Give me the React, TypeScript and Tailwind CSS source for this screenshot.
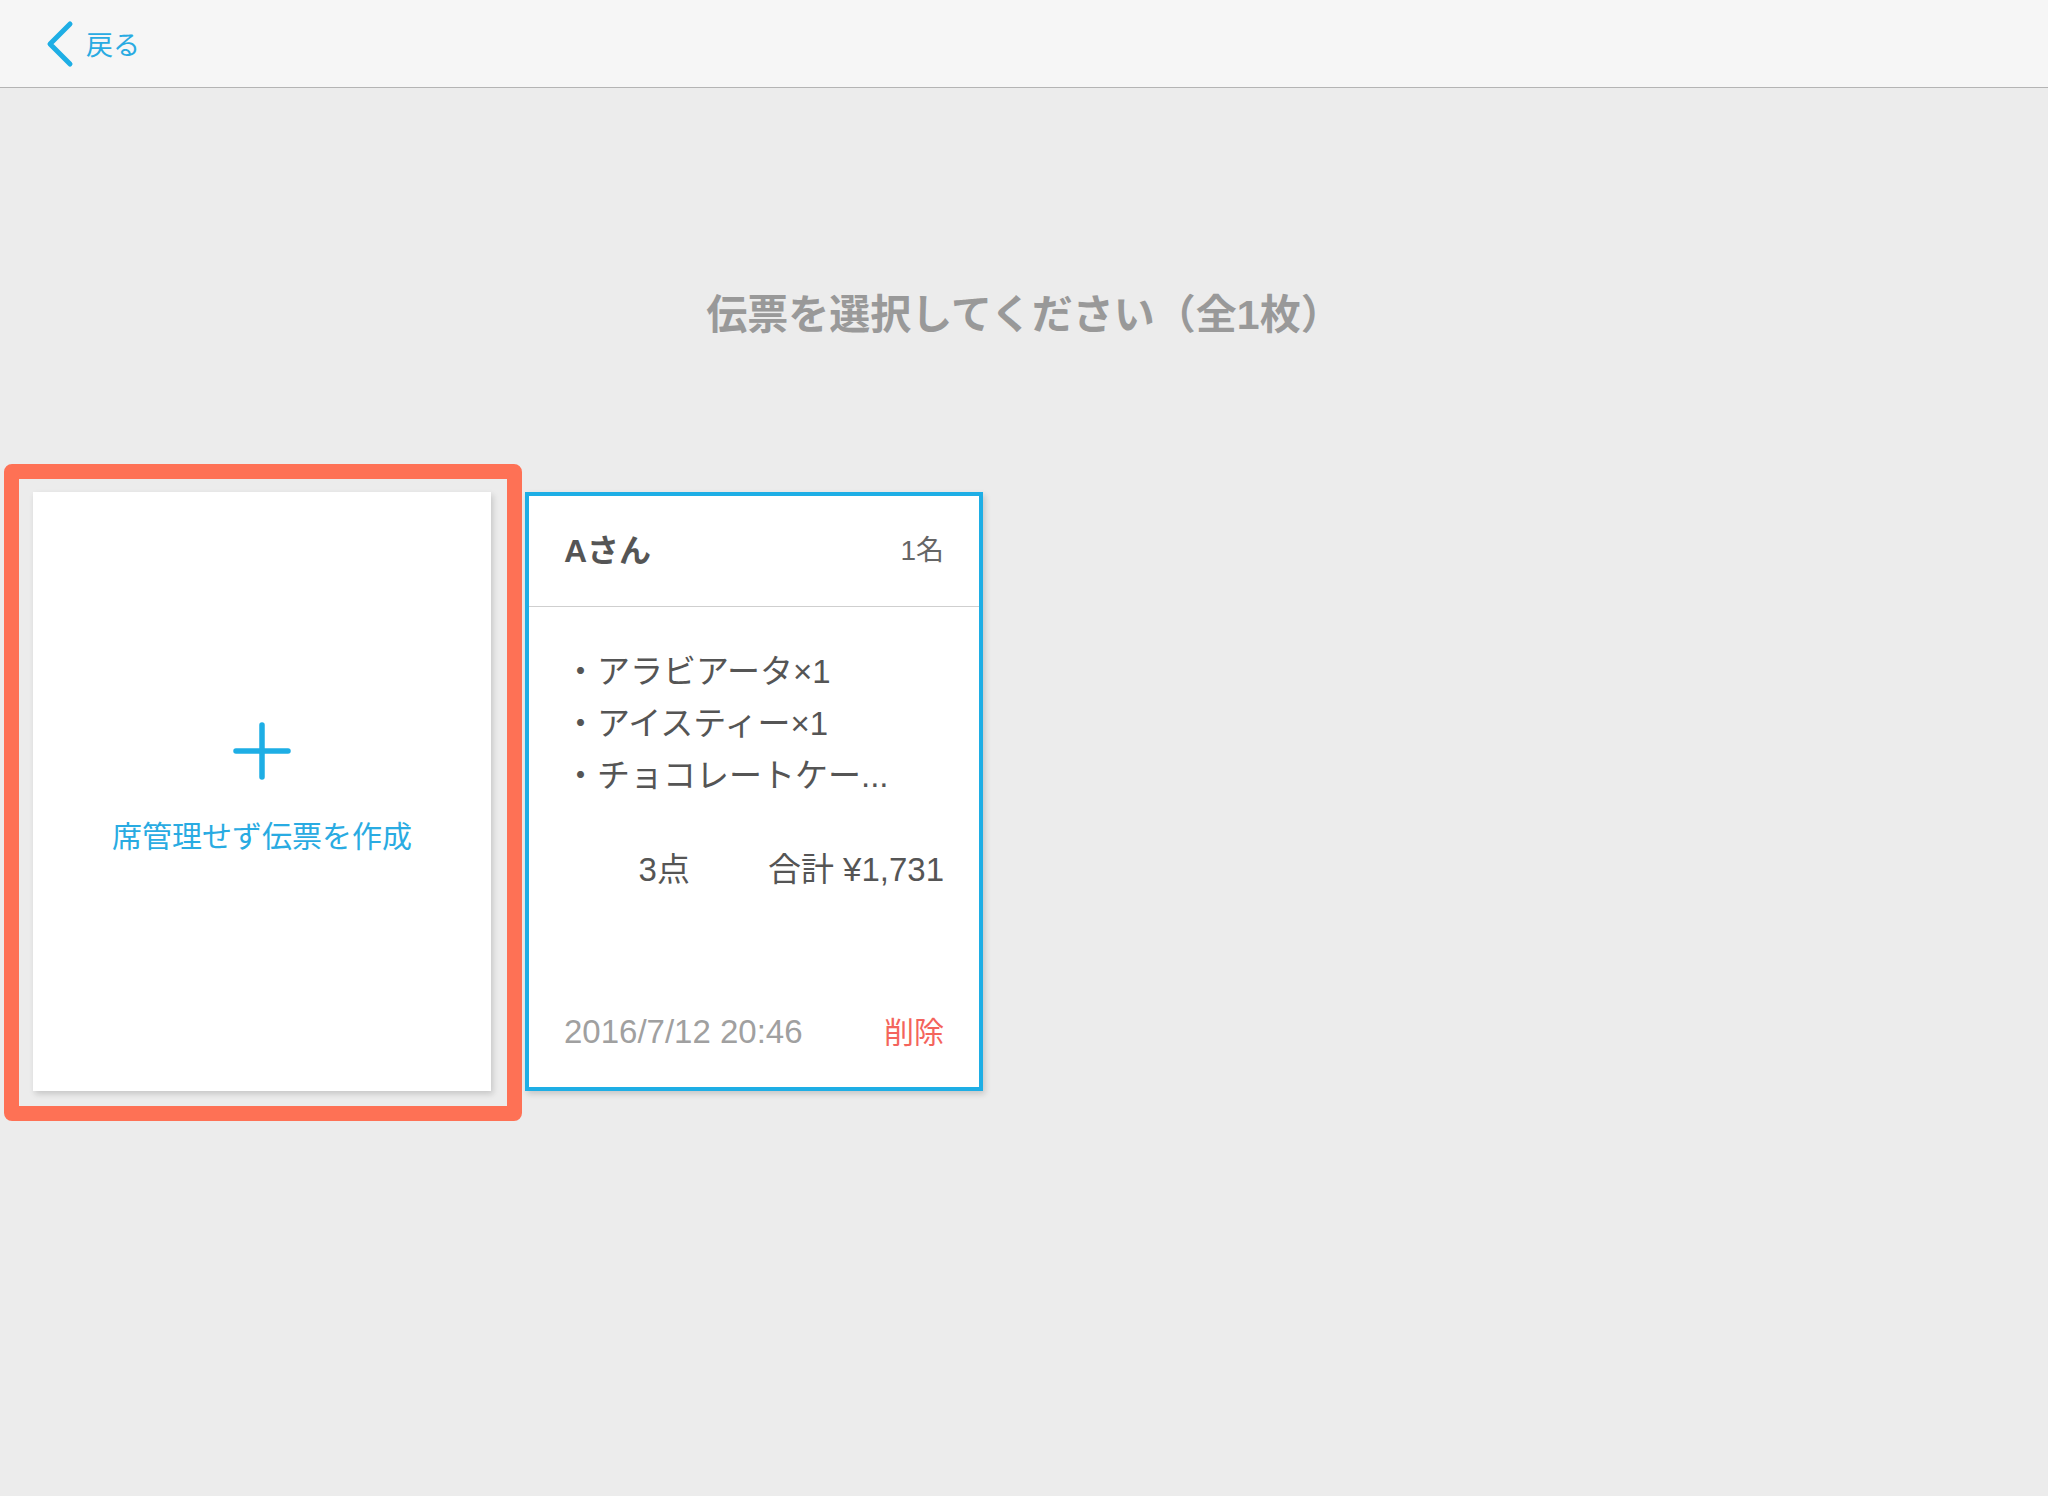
import React from 'react';

const items = ['アラビアータ×1', 'アイスティー×1', 'チョコレートケー...'];

const BackButton: React.FC = () => (
  <button className="flex items-center gap-[12px] text-[#29abe2]">
    <svg width="28" height="48" viewBox="0 0 28 48" fill="none">
      <polyline
        points="24,4 4,24 24,44"
        stroke="#1eaee5"
        strokeWidth="5"
        strokeLinecap="round"
        strokeLinejoin="round"
      />
    </svg>
    <span className="mt-[5px] text-[27px] leading-none">戻る</span>
  </button>
);

const NewSlipCard: React.FC = () => (
  <div className="relative">
    {/* highlight frame around the first card */}
    <div className="absolute -left-[29px] -top-[28px] -right-[31px] -bottom-[30px] rounded-[8px] border-[15px] border-[#fe7155]" />
    <div className="flex h-[599px] w-[458px] flex-col items-center justify-center bg-white pb-[5px] shadow-[2px_3px_6px_rgba(0,0,0,0.16)]">
      <svg width="58" height="58" viewBox="0 0 58 58" fill="none">
        <path d="M29 3v52M3 29h52" stroke="#1eaee5" strokeWidth="5.5" strokeLinecap="round" />
      </svg>
      <div className="mt-[37px] text-[30px] leading-[40px] text-[#29abe2]">席管理せず伝票を作成</div>
    </div>
  </div>
);

const SlipCard: React.FC = () => (
  <div className="flex h-[599px] w-[458px] flex-col border-[4px] border-[#1eaee5] bg-white shadow-[2px_3px_6px_rgba(0,0,0,0.16)]">
    <div className="flex h-[111px] items-center justify-between border-b border-[#cfcfcf] px-[35px]">
      <span className="text-[32px] font-bold text-[#555]">Aさん</span>
      <span className="text-[28px] text-[#666]">1名</span>
    </div>
    <div className="flex-1 px-[35px] pt-[39px] text-[#555]">
      {items.map((it) => (
        <div key={it} className="text-[33px] leading-[52px]">
          ・{it}
        </div>
      ))}
      <div className="mt-[42px] flex justify-end gap-[78px] text-[33px] leading-[52px]">
        <span>3点</span>
        <span>合計 ¥1,731</span>
      </div>
    </div>
    <div className="flex h-[110px] items-center justify-between px-[35px]">
      <span className="text-[33px] text-[#a0a0a0]">2016/7/12 20:46</span>
      <span className="text-[30px] text-[#f4645c]">削除</span>
    </div>
  </div>
);

const App: React.FC = () => {
  return (
    <div className="min-h-screen w-full bg-[#ececec] font-['Liberation_Sans','Noto_Sans_CJK_JP',sans-serif]">
      <header className="flex h-[88px] items-center border-b border-[#b4b4b4] bg-[#f6f6f6] pl-[46px]">
        <BackButton />
      </header>

      <h1 className="pt-[199px] text-center text-[41px] font-bold leading-[56px] text-[#999]">
        伝票を選択してください（全1枚）
      </h1>

      <div className="mt-[149px] flex gap-[34px] pl-[33px]">
        <NewSlipCard />
        <SlipCard />
      </div>
    </div>
  );
};

export default App;
